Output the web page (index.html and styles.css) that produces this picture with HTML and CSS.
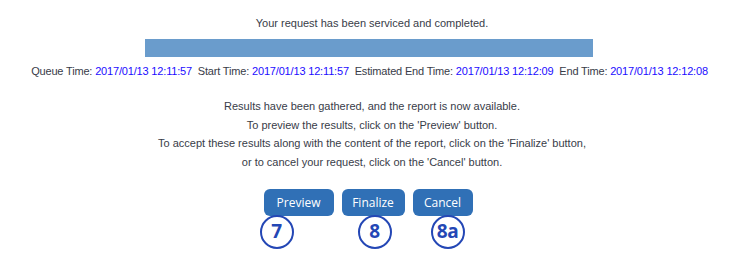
FILE: index.html
```html
<!DOCTYPE html>
<html lang="en">
<head>
    <meta charset="UTF-8">
    <title>Request Status</title>
    <link rel="stylesheet" href="styles.css">
</head>
<body>
    <div class="status">
        <p class="status-title">Your request has been serviced and completed.</p>
        <div class="progress"></div>
        <p class="times">
            Queue Time: <span class="val">2017/01/13 12:11:57</span>&nbsp; Start Time: <span class="val">2017/01/13 12:11:57</span>&nbsp; Estimated End Time: <span class="val">2017/01/13 12:12:09</span>&nbsp; End Time: <span class="val">2017/01/13 12:12:08</span>
        </p>
        <div class="message">
            <p>Results have been gathered, and the report is now available.</p>
            <p>To preview the results, click on the 'Preview' button.</p>
            <p>To accept these results along with the content of the report, click on the 'Finalize' button,</p>
            <p>or to cancel your request, click on the 'Cancel' button.</p>
        </div>
        <div class="actions">
            <div class="action">
                <button class="btn btn-preview">Preview</button>
                <div class="callout c7">7</div>
            </div>
            <div class="action">
                <button class="btn btn-finalize">Finalize</button>
                <div class="callout c8">8</div>
            </div>
            <div class="action">
                <button class="btn btn-cancel">Cancel</button>
                <div class="callout c8a">8a</div>
            </div>
        </div>
    </div>
</body>
</html>
```

FILE: styles.css
```css
*{
    box-sizing: border-box;
}
body{
    margin: 0;
    background-color: #fff;
    font-family: "Liberation Sans", Arial, sans-serif;
    font-size: 11px;
    color: #383c48;
}
p{
    margin: 0;
}
.status{
    padding-top: 14px;
    text-align: center;
}
.status-title{
    line-height: 18px;
}
.progress{
    width: 448px;
    height: 18px;
    margin: 7px 0 0 145px;
    background-color: #6a9ccc;
}
.times{
    margin-top: 5px;
    padding-right: 5px;
    line-height: 18px;
    white-space: nowrap;
    letter-spacing: -0.17px;
}
.times .val{
    color: #1c0cff;
}
.message{
    margin-top: 17px;
}
.message p{
    line-height: 18.5px;
}
.actions{
    display: flex;
    justify-content: center;
    align-items: flex-start;
    gap: 8px;
    margin-top: 18px;
    padding-right: 8px;
}
.action{
    display: flex;
    flex-direction: column;
    align-items: flex-start;
}
.btn{
    display: block;
    height: 27px;
    padding: 0;
    border: none;
    border-radius: 6px;
    background-color: #3070b6;
    color: #fff;
    font-family: "Open Sans", sans-serif;
    font-size: 12px;
    cursor: pointer;
}
.btn-preview{
    width: 70px;
}
.btn-finalize{
    width: 63px;
}
.btn-cancel{
    width: 60px;
}
.callout{
    width: 34px;
    height: 34px;
    margin-top: -1px;
    border: 2.5px solid #2447b5;
    border-radius: 50%;
    background-color: #fff;
    color: #2447b5;
    font-family: "Open Sans", sans-serif;
    font-weight: bold;
    font-size: 19px;
    line-height: 29px;
    text-align: center;
    letter-spacing: -0.5px;
}
.c7{
    margin-left: -4px;
}
.c8{
    margin-left: 16px;
}
.c8a{
    margin-left: 18px;
}
```
